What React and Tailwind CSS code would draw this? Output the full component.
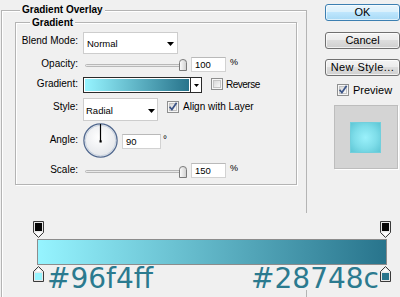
import React from "react";

function Tri({ className = "", w = 7, h = 4 }) {
  return (
    <svg className={className} width={w} height={h} viewBox={`0 0 ${w} ${h}`}>
      <path d={`M0 0 H${w} L${w / 2} ${h} Z`} fill="#000" />
    </svg>
  );
}

function Checkbox({ className = "", checked = false, id }) {
  return (
    <svg className={`shrink-0 ${className}`} width="12" height="12" viewBox="0 0 12 12">
      <defs>
        <linearGradient id={id} x1="0" y1="0" x2="1" y2="1">
          <stop offset="0" stopColor="#d6d6d6" />
          <stop offset="1" stopColor="#fbfbfb" />
        </linearGradient>
      </defs>
      <rect x="0.5" y="0.5" width="11" height="11" fill="#f6f6f6" stroke="#8e8f8f" />
      <rect x="2.5" y="2.5" width="7" height="7" fill={`url(#${id})`} stroke="#c4c4c4" />
      {checked && (
        <path d="M2.6 5.8 L4.9 8.6 L9.6 1.8" stroke="#3b5487" strokeWidth="1.7" fill="none" />
      )}
    </svg>
  );
}

function Thumb({ id }) {
  return (
    <svg width="8" height="12" viewBox="0 0 8 12">
      <defs>
        <linearGradient id={id} x1="0" y1="0" x2="1" y2="0">
          <stop offset="0" stopColor="#fdfdfd" />
          <stop offset="1" stopColor="#cfcfcf" />
        </linearGradient>
      </defs>
      <path d="M0.5 11.5 V3.5 Q0.5 0.5 4 0.5 Q7.5 0.5 7.5 3.5 V11.5 Z" fill={`url(#${id})`} stroke="#7a7a7a" />
    </svg>
  );
}

function Slider({ className = "", thumbTop, id }) {
  return (
    <div className={`relative w-[102px] h-[15px] shrink-0 ${className}`}>
      <div className="absolute left-0 right-[3px] top-[7px] h-[3px] rounded-full border border-[#b8b8b8] bg-[#e9e9e9]" />
      <div className="absolute right-0" style={{ top: thumbTop }}>
        <Thumb id={id} />
      </div>
    </div>
  );
}

function Input({ className = "", children }) {
  return (
    <div
      className={`h-[15px] shrink-0 border border-[#d2d2d2] border-t-[#b9b9b9] bg-white flex items-center pl-[3px] text-[9.5px] leading-[12px] ${className}`}
    >
      {children}
    </div>
  );
}

function Label({ className = "", children }) {
  return (
    <div className={`w-[62px] shrink-0 text-right text-[10px] leading-[12px] ${className}`}>{children}</div>
  );
}

function Dial() {
  return (
    <svg className="ml-[5px] shrink-0" width="35" height="35" viewBox="0 0 35 35">
      <defs>
        <radialGradient id="dialfill" cx="0.45" cy="0.4" r="0.6">
          <stop offset="0" stopColor="#ffffff" />
          <stop offset="1" stopColor="#e4e6ea" />
        </radialGradient>
      </defs>
      <circle cx="17.5" cy="17.5" r="16.6" fill="url(#dialfill)" stroke="#52698f" strokeWidth="1.3" />
      <circle cx="17.5" cy="17.5" r="15.3" fill="none" stroke="#c3cedc" strokeWidth="0.9" />
      <line x1="17.5" y1="18" x2="17.5" y2="1" stroke="#000" strokeWidth="1.2" />
      <rect x="16.5" y="17.3" width="2.2" height="2.2" fill="#000" />
    </svg>
  );
}

function TopStop() {
  return (
    <svg width="11" height="17" viewBox="0 0 11 17">
      <path d="M0.5 0.5 H10.5 V11.5 L5.5 16.5 L0.5 11.5 Z" fill="#e8e8e8" stroke="#3a3a3a" />
      <rect x="2" y="2" width="7" height="8" fill="#050505" />
      <path d="M2 11.5 H9 L5.5 15 Z" fill="#ffffff" />
    </svg>
  );
}

function BottomStop({ color }) {
  return (
    <svg className="shrink-0" width="11" height="16" viewBox="0 0 11 16">
      <path d="M5.5 0.5 L10.5 5.5 V15.5 H0.5 V5.5 Z" fill="#e8e8e8" stroke="#3a3a3a" />
      <path d="M5.5 2.5 L8.5 5.5 H2.5 Z" fill="#ffffff" />
      <rect x="2" y="7" width="7" height="7" fill={color} />
    </svg>
  );
}

const btnGray =
  "h-[17px] w-[75px] rounded-[3px] border border-[#707070] bg-[linear-gradient(#f4f4f4_0%,#ebebeb_50%,#dddddd_50%,#cfcfcf_100%)] shadow-[inset_0_0_0_1px_rgba(255,255,255,0.7)] flex items-center justify-center text-[11px] leading-[13px]";

export default function App() {
  return (
    <div className="relative w-[400px] h-[297px] overflow-hidden bg-[#f0f0f0] text-black font-['Liberation_Sans',Arial,sans-serif] flex items-start">
      {/* Outer group box */}
      <div className="ml-[1px] mt-[10px] w-[306px] h-[300px] shrink-0 border-t border-l border-r border-[#b4b4b4] shadow-[inset_1px_1px_0_#ffffff]">
        <div className="-mt-[7px] ml-[18px] w-fit px-[2px] bg-[#f0f0f0] text-[10px] leading-[12px] font-bold">
          Gradient Overlay
        </div>

        {/* Inner group box */}
        <div className="mt-[6px] ml-[13px] w-[282px] h-[163px] border border-[#b4b4b4] shadow-[inset_1px_1px_0_#ffffff,1px_1px_0_#ffffff]">
          <div className="-mt-[6px] ml-[14px] w-fit px-[2px] bg-[#f0f0f0] text-[10px] leading-[12px] font-bold">
            Gradient
          </div>

          {/* Blend Mode */}
          <div className="mt-[3px] flex items-start h-[22px]">
            <Label className="mt-[3px]">Blend Mode:</Label>
            <div className="ml-[5px] w-[95px] h-[22px] border border-[#cdcdcd] bg-white flex items-start">
              <span className="ml-[3px] mt-[5px] text-[9.5px] leading-[12px]">Normal</span>
              <Tri className="ml-auto mr-[3px] mt-[9px]" />
            </div>
          </div>

          {/* Opacity */}
          <div className="mt-[3px] flex items-start h-[15px]">
            <Label className="mt-[1px]">Opacity:</Label>
            <Slider className="ml-[7px]" thumbTop={2} id="th1" />
            <Input className="ml-[4px] w-[35px]">100</Input>
            <span className="ml-[4px] -mt-[1px] text-[9px] leading-[12px]">%</span>
          </div>

          {/* Gradient */}
          <div className="mt-[5px] flex items-start h-[16px]">
            <Label className="mt-[1px]">Gradient:</Label>
            <div className="ml-[5px] flex">
              <div className="w-[108px] h-[16px] border border-[#2a2a2a] p-[1px] bg-white">
                <div className="h-full bg-[linear-gradient(to_right,#96f4ff,#28748c)]" />
              </div>
              <div className="w-[11px] h-[16px] border border-l-0 border-[#2a2a2a] bg-white flex items-center justify-center">
                <Tri w={5} h={3} />
              </div>
            </div>
            <Checkbox className="ml-[9px] mt-[1px]" id="cb1" />
            <span className="ml-[3px] mt-[2px] text-[10px] leading-[12px] tracking-[-0.5px]">Reverse</span>
          </div>

          {/* Style */}
          <div className="mt-[5px] flex items-start h-[23px]">
            <Label className="mt-[3px]">Style:</Label>
            <div className="ml-[5px] w-[75px] h-[23px] border border-[#cdcdcd] bg-white flex items-start">
              <span className="ml-[2px] mt-[6px] text-[9.5px] leading-[12px]">Radial</span>
              <Tri className="ml-auto mr-[2px] mt-[10px]" />
            </div>
            <Checkbox className="ml-[9px] mt-[3px]" checked id="cb2" />
            <span className="ml-[4px] mt-[3px] text-[10px] leading-[12px]">Align with Layer</span>
          </div>

          {/* Angle */}
          <div className="mt-[2px] flex items-start h-[36px]">
            <Label className="mt-[11px]">Angle:</Label>
            <Dial />
            <Input className="ml-[4px] mt-[11px] w-[39px]">90</Input>
            <span className="ml-[2px] mt-[11px] text-[10px] leading-[12px]">°</span>
          </div>

          {/* Scale */}
          <div className="mt-[4px] flex items-start h-[15px]">
            <Label className="mt-[1px]">Scale:</Label>
            <Slider className="ml-[7px]" thumbTop={3} id="th2" />
            <Input className="ml-[4px] w-[35px]">150</Input>
            <span className="ml-[4px] -mt-[1px] text-[9px] leading-[12px]">%</span>
          </div>
        </div>
      </div>

      {/* Right column */}
      <div className="ml-[18px] mt-[4px] w-[75px] shrink-0 flex flex-col">
        <div className="h-[17px] w-[75px] rounded-[3px] border border-[#3c7fb1] bg-[linear-gradient(#e8f5fc_0%,#d9f0fc_50%,#bee6fd_50%,#a7d9f5_100%)] shadow-[inset_0_0_0_1px_rgba(255,255,255,0.6)] flex items-center justify-center text-[11px] leading-[13px]">
          OK
        </div>
        <div className={`mt-[11px] ${btnGray}`}>Cancel</div>
        <div className={`mt-[10px] ${btnGray} tracking-[0.4px]`}>New Style...</div>
        <div className="mt-[8px] ml-[12px] flex items-start">
          <Checkbox checked id="cb3" />
          <span className="ml-[4px] text-[11px] leading-[13px]">Preview</span>
        </div>
        <div className="mt-[8px] ml-[9px] w-[64px] h-[64px] border border-[#bdbdbd] bg-[#d4d4d4] shadow-[1px_1px_0_#ffffff]">
          <div className="ml-[15px] mt-[16px] w-[31px] h-[31px] border border-[#72cfdc] bg-[radial-gradient(circle,#9af1fb_0%,#7edde9_55%,#5ec6d5_100%)]" />
        </div>
      </div>

      {/* Gradient editor overlay */}
      <div className="absolute left-[20px] top-[213px] w-[378px] h-[77px] bg-[#f0f0f0]">
        <div className="ml-[13px] mt-[8px] w-[358px] flex justify-between">
          <TopStop />
          <TopStop />
        </div>
        <div className="ml-[17px] mt-[1px] w-[350px] h-[26px] border border-[#8c8c8c] bg-[linear-gradient(to_right,#96f4ff,#28748c)]" />
        <div className="ml-[13px] mt-[1px] w-[358px] flex items-start">
          <BottomStop color="#96f4ff" />
          <span className="ml-[3px] -mt-[1px] font-['DejaVu_Sans',sans-serif] text-[28px] leading-[28px] text-[#2b7a8f]">
            #96f4ff
          </span>
          <span className="ml-auto mr-[1px] -mt-[1px] font-['DejaVu_Sans',sans-serif] text-[28px] leading-[28px] text-[#2b7a8f]">
            #28748c
          </span>
          <BottomStop color="#28748c" />
        </div>
      </div>
    </div>
  );
}
